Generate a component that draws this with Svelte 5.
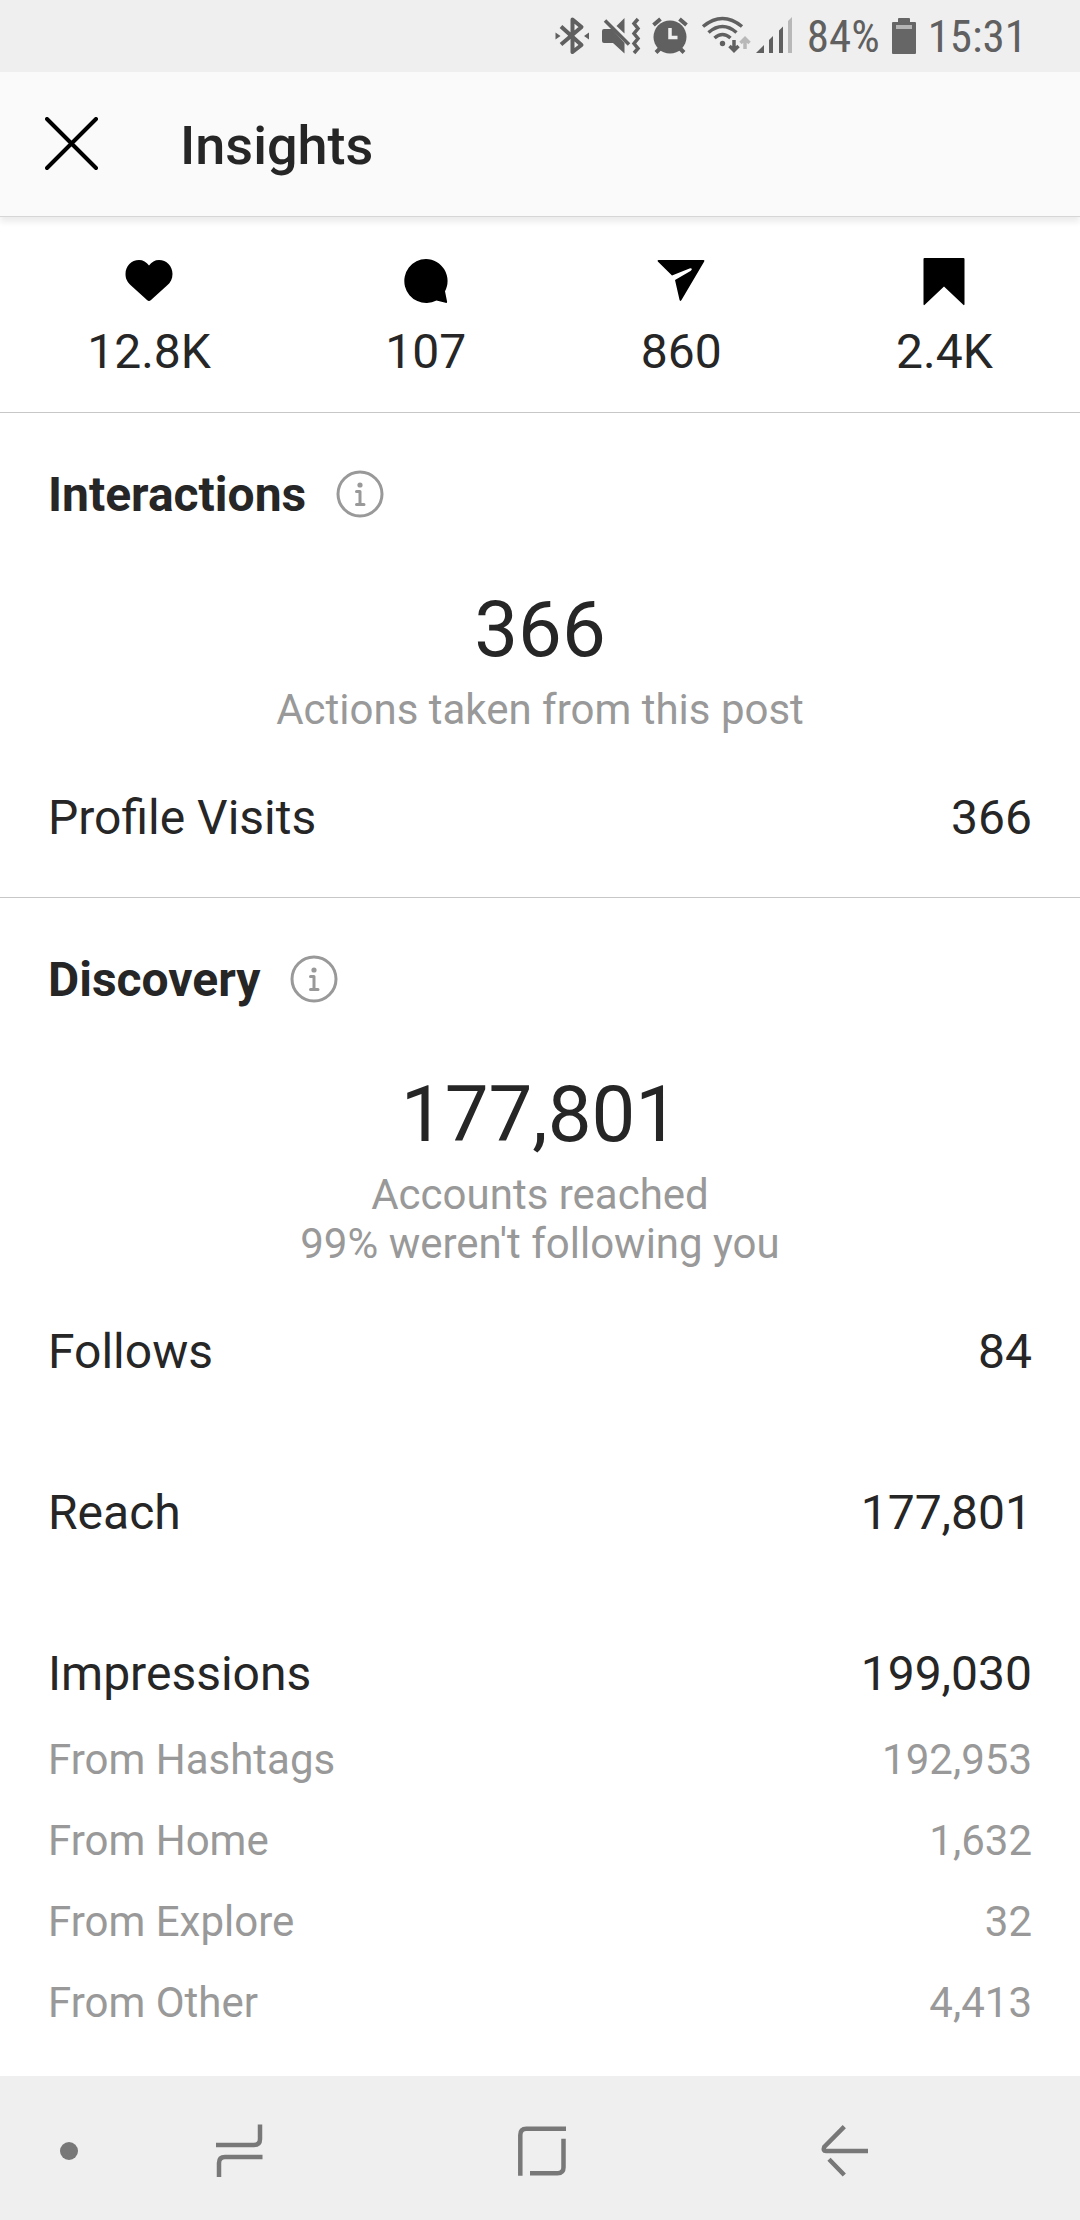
<script>
  const stats = [
    { icon: "heart", label: "Likes", value: "12.8K" },
    { icon: "comment", label: "Comments", value: "107" },
    { icon: "share", label: "Shares", value: "860" },
    { icon: "save", label: "Saves", value: "2.4K" },
  ];

  const discovery = [
    { label: "Follows", value: "84" },
    { label: "Reach", value: "177,801" },
    { label: "Impressions", value: "199,030" },
  ];

  const sources = [
    { label: "From Hashtags", value: "192,953" },
    { label: "From Home", value: "1,632" },
    { label: "From Explore", value: "32" },
    { label: "From Other", value: "4,413" },
  ];
</script>

{#snippet info(topic)}
  <button type="button" class="info-btn" aria-label="About {topic}">
    <svg width="48" height="48" viewBox="0 0 48 48" fill="none" stroke="#999" stroke-width="3">
      <circle cx="24" cy="24" r="22" />
      <circle cx="24" cy="15" r="2.6" fill="#999" stroke="none" />
      <path d="M20.5 21.5H24V34.5M20.5 34.5h7.5" stroke-linecap="round" stroke-linejoin="round" />
    </svg>
  </button>
{/snippet}

<div class="screen">
  <div class="status-bar">
    <svg width="246" height="72" viewBox="550 0 246 72" fill="#606060">
      <!-- bluetooth -->
      <path d="M562 26.5L582.5 45 573.5 52V19.5L582.5 27 562 44.5" fill="none" stroke="#606060" stroke-width="4" stroke-linejoin="round" />
      <path d="M556.5 32.500v7l5-3.500zM590 32.500v7l-5-3.500z" />
      <!-- muted with vibration -->
      <path d="M603 31q0-2 2-2h8l12.500 14V53.500L614 43h-9q-2 0-2-2zM617.500 26l8-8v15.500z" />
      <path d="M606 20.500l24 24" fill="none" stroke="#606060" stroke-width="3.5" />
      <path d="M639 19l-4 4.500 4 5-4 5 4 5-4 5 4 5-4 4.500" fill="none" stroke="#606060" stroke-width="3.5" />
      <!-- alarm -->
      <circle cx="671" cy="37" r="16.5" />
      <path d="M654.500 25l7-6M687.500 25l-7-6M657 52.500l6-6M685 52.500l-6-6" fill="none" stroke="#606060" stroke-width="4" />
      <path d="M671 28v9.500h7.500" fill="none" stroke="#efefef" stroke-width="3.5" />
      <!-- wifi -->
      <g fill="none" stroke="#606060" stroke-width="3.5">
        <path d="M704 26.500q19.500-16 39 0M709.500 32.500q14-12 28 0M715.500 38q8-7 16 0" />
        <path d="M735 40v10M730.500 46l4.500 4.500 4.500-4.500" />
        <path d="M746 49V39M741.500 43l4.500-4.500 4.500 4.500" stroke="#b8b8b8" />
      </g>
      <circle cx="723.5" cy="43.5" r="2.7" />
      <!-- signal -->
      <path d="M757 53l8-8v8zM770 40l4-4v17h-4zM780 30.500l4-4V53h-4z" />
      <path d="M789 21l4-4v36h-4z" fill="#b8b8b8" />
    </svg>
    <span>84%</span>
    <svg width="24" height="36" viewBox="0 0 24 36">
      <path d="M7 0h10q1 0 1 1v3h5q1 0 1 1v30q0 1-1 1H1q-1 0-1-1V5q0-1 1-1h5V1q0-1 1-1z" fill="#666" />
      <path d="M4 7h16v4H4z" fill="#b5b5b5" />
    </svg>
    <time>15:31</time>
  </div>

  <header class="app-bar">
    <button type="button" class="close-btn" aria-label="Close">
      <svg width="54" height="54" viewBox="0 0 54 54" fill="none" stroke="#000" stroke-width="4" stroke-linecap="round">
        <path d="M2 2l49 49M51 2L2 51" />
      </svg>
    </button>
    <h1>Insights</h1>
  </header>

  <main>
    <ul class="stats">
      {#each stats as stat}
        <li>
          <svg role="img" aria-label={stat.label} width="48" height="48" viewBox="0 0 48 48">
            {#if stat.icon === "heart"}
              <path d="M24 7.500C26.500 4 30 2 34 2c7.500 0 13.500 6 13.500 14 0 5-2 8.500-5.500 11.500L26 42q-2 2-4 0L6 27.500C2.500 24 .500 21 .500 16 .500 8 6.500 2 14 2c4 0 7.500 2 10 5.500z" />
            {:else if stat.icon === "comment"}
              <path d="M24 1a22 22 0 1 0 10.500 41.500l9 2.300q2 .500 1.500-1.500l-2-10A22 22 0 0 0 24 1z" />
            {:else if stat.icon === "share"}
              <path d="M1.500 2h45q1.500 0 .700 1.500L24.500 42q-1.500 2-2-.200L18 22l15.500-9q2-1.500 1-2.500-.500-.500-2 0L15 17.500.800 3.500Q0 2 1.500 2z" />
            {:else}
              <path d="M4.500 0h39q1 0 1 1v45q0 2-1.500.500L24 28.500 5 46.500Q3.500 48 3.500 46V1q0-1 1-1z" />
            {/if}
          </svg>
          <span>{stat.value}</span>
        </li>
      {/each}
    </ul>

    <section>
      <div class="section-title">
        <h2>Interactions</h2>
        {@render info("interactions")}
      </div>
      <div class="summary">
        <strong>366</strong>
        <p>Actions taken from this post</p>
      </div>
      <dl>
        <div class="row">
          <dt>Profile Visits</dt>
          <dd>366</dd>
        </div>
      </dl>
    </section>

    <section>
      <div class="section-title">
        <h2>Discovery</h2>
        {@render info("discovery")}
      </div>
      <div class="summary">
        <strong>177,801</strong>
        <p>Accounts reached</p>
        <p>99% weren't following you</p>
      </div>
      <dl>
        {#each discovery as item}
          <div class="row">
            <dt>{item.label}</dt>
            <dd>{item.value}</dd>
          </div>
        {/each}
      </dl>
      <dl class="sources">
        {#each sources as item}
          <div class="row">
            <dt>{item.label}</dt>
            <dd>{item.value}</dd>
          </div>
        {/each}
      </dl>
    </section>
  </main>

  <nav class="nav-bar">
    <button type="button" class="pin-btn" aria-label="Hide navigation bar">
      <svg width="18" height="18" viewBox="0 0 18 18">
        <circle cx="9" cy="9" r="9" fill="#787878" />
      </svg>
    </button>
    <div class="nav-keys">
      <button type="button" aria-label="Recent apps">
        <svg width="48" height="54" viewBox="0 0 48 54" fill="none" stroke="#787878" stroke-width="4.5">
          <path d="M1 21h38q6 0 6-6V.500M4 53V39q0-6 6-6h37.500" />
        </svg>
      </button>
      <button type="button" aria-label="Home">
        <svg width="48" height="54" viewBox="0 0 48 54" fill="none" stroke="#787878" stroke-width="4.5">
          <path d="M2.300 51.700V11q0-6.300 6-6.300H48M12 49.300h27.500q6 0 6-6V14.700" />
        </svg>
      </button>
      <button type="button" aria-label="Back">
        <svg width="48" height="54" viewBox="0 0 48 54" fill="none" stroke="#787878" stroke-width="4.5">
          <path d="M23.300 2.700L3.200 23q-1.500 4 1.800 4h42M8 35.300L23.300 51" />
        </svg>
      </button>
    </div>
  </nav>
</div>

<style>
  :global(body) {
    margin: 0;
    background: #fff;
  }
  .screen {
    display: flex;
    flex-direction: column;
    min-height: 100vh;
    font-family: Roboto, sans-serif;
    font-size: 48px;
    line-height: 56px;
    color: #262626;
  }
  button {
    display: flex;
    align-items: center;
    justify-content: center;
    padding: 0;
    border: 0;
    background: none;
  }
  svg {
    display: block;
    flex: none;
  }
  h1,
  h2,
  p,
  ul,
  dl,
  dd {
    margin: 0;
    padding: 0;
  }
  .status-bar {
    display: flex;
    align-items: center;
    justify-content: flex-end;
    gap: 12px;
    height: 72px;
    padding-right: 53px;
    background: #efefef;
    color: #606060;
    font-family: "Roboto Condensed", Roboto, sans-serif;
    font-size: 45px;
  }
  .status-bar span,
  .status-bar time {
    padding-top: 2px;
  }
  .app-bar {
    display: flex;
    align-items: center;
    height: 144px;
    background: #fafafa;
    box-shadow: 0 1px 0 #d6d6d6, 0 6px 6px rgba(0, 0, 0, 0.08);
  }
  .close-btn {
    width: 144px;
    height: 144px;
  }
  h1 {
    padding: 4px 0 0 36px;
    font-size: 54px;
    font-weight: 500;
  }
  .stats {
    display: flex;
    justify-content: space-around;
    padding: 42px 0 32px;
    list-style: none;
  }
  .stats li {
    display: flex;
    flex-direction: column;
    align-items: center;
    gap: 18px;
  }
  section {
    padding: 48px 48px 51px;
    border-top: 1px solid #c7c7c7;
  }
  section:last-child {
    padding-bottom: 0;
  }
  .section-title {
    display: flex;
    align-items: center;
    gap: 30px;
    height: 66px;
  }
  h2 {
    padding-top: 2px;
    font-size: 48px;
    font-weight: 700;
  }
  .summary {
    padding-top: 57px;
    text-align: center;
    font-size: 42px;
    line-height: 49px;
    color: #999;
  }
  .summary strong {
    display: block;
    margin-bottom: 9px;
    font-size: 78px;
    line-height: 92px;
    font-weight: 400;
    color: #262626;
  }
  dl {
    display: flex;
    flex-direction: column;
    gap: 105px;
    margin-top: 56px;
  }
  .sources {
    gap: 32px;
    margin-top: 33px;
    font-size: 42px;
    line-height: 49px;
    color: #999;
  }
  .row {
    display: flex;
    justify-content: space-between;
  }
  .nav-bar {
    display: flex;
    height: 138px;
    margin-top: auto;
    padding-top: 6px;
    background: #efefef;
  }
  .nav-bar button {
    width: 202px;
  }
  .nav-bar .pin-btn {
    width: 138px;
  }
  .nav-keys {
    display: flex;
    flex: 1;
    justify-content: space-between;
    padding-right: 134px;
  }
</style>
